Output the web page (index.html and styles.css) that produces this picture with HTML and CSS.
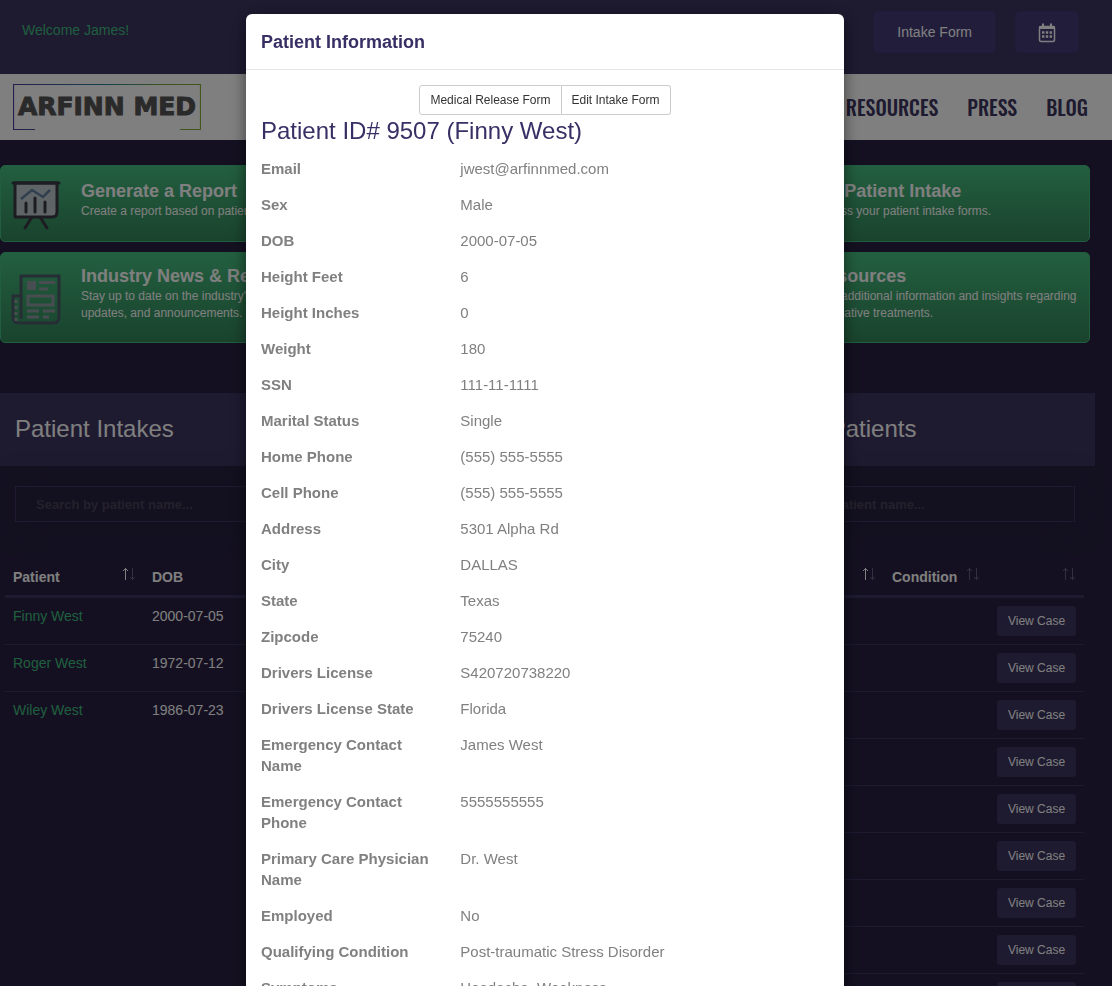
FILE: index.html
```html
<!DOCTYPE html>
<html lang="en">
<head>
<meta charset="utf-8">
<title>Arfinn Med - Patient Information</title>
<meta name="viewport" content="width=device-width, initial-scale=1">
<link rel="stylesheet" href="styles.css">
</head>
<body>
<svg class="sprite" aria-hidden="true">
  <symbol id="sort" viewBox="0 0 14 14">
    <path class="up" d="M3.500 13V1M1 4l2.500-2.500L6 4" fill="none"/>
    <path class="down" d="M10.500 1v12M8 10l2.500 2.500L13 10" fill="none"/>
  </symbol>
</svg>

<header class="topbar">
  <span class="welcome">Welcome James!</span>
  <div class="topbar-actions">
    <button type="button" class="btn-top">Intake Form</button>
    <button type="button" class="btn-top btn-calendar" aria-label="Calendar">
      <svg width="18" height="20" viewBox="0 0 18 20">
        <path d="M5 0.500v3M13 0.500v3" stroke="#fff" stroke-width="2"/>
        <rect x="1.500" y="3.500" width="15" height="15" rx="1.500" fill="none" stroke="#fff" stroke-width="1.500"/>
        <path d="M1 3h16v3H1z" fill="#fff"/>
        <path d="M4 9.500h10M4 13.500h10" stroke="#fff" stroke-width="2.400" stroke-dasharray="2.400 1.400"/>
      </svg>
    </button>
  </div>
</header>

<nav class="navbar">
  <a href="#home" class="logo">
    <svg class="logo-frame" width="188" height="46" viewBox="0 0 188 46" aria-hidden="true">
      <defs>
        <linearGradient id="frame" x1="0" y1="0" x2="188" y2="0" gradientUnits="userSpaceOnUse">
          <stop offset="0" stop-color="#4b3f96"/>
          <stop offset=".5" stop-color="#2d8299"/>
          <stop offset=".8" stop-color="#76a83e"/>
          <stop offset="1" stop-color="#82ae38"/>
        </linearGradient>
      </defs>
      <path d="M22 45.500H.5V.5h187v45H167" fill="none" stroke="url(#frame)" stroke-width="1.200"/>
    </svg>
    <span class="logo-text">ARFINN MED</span>
  </a>
  <div class="nav-links">
    <a href="#resources">RESOURCES</a>
    <a href="#press">PRESS</a>
    <a href="#blog">BLOG</a>
  </div>
</nav>

<main>
  <section class="cards">
    <a class="card" href="#report">
      <svg class="card-icon" width="50" height="52" viewBox="0 0 50 52">
        <path d="M21 37L14 48M29 37l7 11" stroke="#383944" stroke-width="3" stroke-linecap="round"/>
        <path d="M4 3h42v29q0 5-5 5H4z" fill="#bfc8cf" stroke="#383944" stroke-width="3" stroke-linejoin="round"/>
        <path d="M2 3h46" stroke="#383944" stroke-width="3" stroke-linecap="round"/>
        <path d="M10 19l11-9 11 7 7-7" fill="none" stroke="#5f7f9f" stroke-width="2.500"/>
        <path d="M15 23v9M24 18v14M34 22v10" stroke="#383944" stroke-width="3" stroke-linecap="round"/>
      </svg>
      <div class="card-text">
        <h4>Generate a Report</h4>
        <p>Create a report based on patient data.</p>
      </div>
    </a>
    <a class="card card-last" href="#intake">
      <div class="card-text">
        <h4>My Patient Intake</h4>
        <p>Access your patient intake forms.</p>
      </div>
    </a>
    <a class="card card-tall" href="#news">
      <svg class="card-icon" width="50" height="52" viewBox="0 0 50 52">
        <path d="M10 2h38v41q0 6-6 6H8q-6 0-6-6V22h8z" fill="none" stroke="#4f5b6b" stroke-width="3"/>
        <path d="M10 22v23" stroke="#4f5b6b" stroke-width="3"/>
        <path d="M5 26v22" stroke="#919ba3" stroke-width="3" stroke-dasharray="3 3"/>
        <path d="M16 7h9v9h-9z" fill="#919ba3"/>
        <path d="M28 8.500h16M28 15h9M16 37h12M32 37h12M16 43h12M32 43h6" stroke="#919ba3" stroke-width="3"/>
        <path d="M17 22h25v9H17z" fill="none" stroke="#919ba3" stroke-width="3"/>
      </svg>
      <div class="card-text">
        <h4>Industry News &amp; Research</h4>
        <p>Stay up to date on the industry's latest news, updates, and announcements.</p>
      </div>
    </a>
    <a class="card card-tall card-last" href="#library">
      <div class="card-text">
        <h4>Resources</h4>
        <p>Find additional information and insights regarding alternative treatments.</p>
      </div>
    </a>
  </section>

  <section class="panels">
    <div class="panels-title">
      <h3>Patient Intakes</h3>
      <h3 class="last">Recent Patients</h3>
    </div>
    <div class="panel">
      <div class="search"><input type="text" placeholder="Search by patient name..." aria-label="Search intakes"></div>
      <table class="intakes">
        <thead>
          <tr>
            <th class="col-name">Patient <svg class="sort sorted"><use href="#sort"/></svg></th>
            <th>DOB</th>
          </tr>
        </thead>
        <tbody>
          <tr><td><a href="#p1">Finny West</a></td><td>2000-07-05</td></tr>
          <tr><td><a href="#p2">Roger West</a></td><td>1972-07-12</td></tr>
          <tr><td><a href="#p3">Wiley West</a></td><td>1986-07-23</td></tr>
        </tbody>
      </table>
    </div>
    <div class="panel panel-last">
      <div class="search"><input type="text" placeholder="Search by patient name..." aria-label="Search patients"></div>
      <table class="patients">
        <thead>
          <tr>
            <th class="col-first"><svg class="sort sorted"><use href="#sort"/></svg></th>
            <th>Condition <svg class="sort"><use href="#sort"/></svg></th>
            <th class="col-action"><svg class="sort"><use href="#sort"/></svg></th>
          </tr>
        </thead>
        <tbody>
          <tr><td></td><td></td><td><button type="button" class="btn-case">View Case</button></td></tr>
          <tr><td></td><td></td><td><button type="button" class="btn-case">View Case</button></td></tr>
          <tr><td></td><td></td><td><button type="button" class="btn-case">View Case</button></td></tr>
          <tr><td></td><td></td><td><button type="button" class="btn-case">View Case</button></td></tr>
          <tr><td></td><td></td><td><button type="button" class="btn-case">View Case</button></td></tr>
          <tr><td></td><td></td><td><button type="button" class="btn-case">View Case</button></td></tr>
          <tr><td></td><td></td><td><button type="button" class="btn-case">View Case</button></td></tr>
          <tr><td></td><td></td><td><button type="button" class="btn-case">View Case</button></td></tr>
          <tr><td></td><td></td><td><button type="button" class="btn-case">View Case</button></td></tr>
        </tbody>
      </table>
    </div>
  </section>
</main>

<div class="overlay">
  <div class="modal" role="dialog" aria-labelledby="modal-title">
    <div class="modal-header"><h4 id="modal-title">Patient Information</h4></div>
    <div class="modal-body">
      <div class="btn-group">
        <button type="button">Medical Release Form</button>
        <button type="button">Edit Intake Form</button>
      </div>
      <h3>Patient ID# 9507 (Finny West)</h3>
      <dl>
        <dt>Email</dt><dd>jwest@arfinnmed.com</dd>
        <dt>Sex</dt><dd>Male</dd>
        <dt>DOB</dt><dd>2000-07-05</dd>
        <dt>Height Feet</dt><dd>6</dd>
        <dt>Height Inches</dt><dd>0</dd>
        <dt>Weight</dt><dd>180</dd>
        <dt>SSN</dt><dd>111-11-1111</dd>
        <dt>Marital Status</dt><dd>Single</dd>
        <dt>Home Phone</dt><dd>(555) 555-5555</dd>
        <dt>Cell Phone</dt><dd>(555) 555-5555</dd>
        <dt>Address</dt><dd>5301 Alpha Rd</dd>
        <dt>City</dt><dd>DALLAS</dd>
        <dt>State</dt><dd>Texas</dd>
        <dt>Zipcode</dt><dd>75240</dd>
        <dt>Drivers License</dt><dd>S420720738220</dd>
        <dt>Drivers License State</dt><dd>Florida</dd>
        <dt>Emergency Contact Name</dt><dd>James West</dd>
        <dt>Emergency Contact Phone</dt><dd>5555555555</dd>
        <dt>Primary Care Physician Name</dt><dd>Dr. West</dd>
        <dt>Employed</dt><dd>No</dd>
        <dt>Qualifying Condition</dt><dd>Post-traumatic Stress Disorder</dd>
        <dt>Symptoms</dt><dd>Headache, Weakness</dd>
      </dl>
    </div>
  </div>
</div>
</body>
</html>
```
FILE: styles.css
```css
* { box-sizing: border-box; }

html { height: 100%; }

body {
  height: 100%;
  margin: 0;
  overflow: hidden;
  background: #282142;
  color: #fff;
  font: 14px/20px "Liberation Sans", Arial, sans-serif;
}

h3, h4, p, dl, dd { margin: 0; }
a { color: #3fbf7f; text-decoration: none; }
button, input { font-family: inherit; }
.sprite { display: none; }

/* top bar */
.topbar {
  display: flex;
  justify-content: space-between;
  align-items: flex-start;
  height: 74px;
  padding: 11px 33px 0 22px;
  background: #3c3460;
}
.welcome { padding-top: 9px; color: #3fbf7f; }
.topbar-actions { display: flex; gap: 19px; }
.btn-top {
  height: 42px;
  padding: 0 23px;
  border: 1px solid #3e3771;
  border-radius: 4px;
  background: #423b76;
  color: #fff;
  font-size: 14px;
}
.btn-calendar { display: flex; align-items: center; padding: 2px 22px 0; }

/* navigation */
.navbar {
  display: flex;
  justify-content: space-between;
  align-items: center;
  height: 66px;
  padding: 0 24px 0 13px;
  background: #fff;
}
.logo { display: grid; align-items: center; justify-items: center; }
.logo > * { grid-area: 1 / 1; }
.logo-frame { display: block; }
.logo-text {
  color: #555;
  font: bold 25px/30px "DejaVu Sans", sans-serif;
  -webkit-text-stroke: 1px #555;
}
.nav-links { display: flex; gap: 29px; }
.nav-links a {
  color: #3c3460;
  font: 500 20px/24px Oswald, "Roboto Condensed", "Liberation Sans", sans-serif;
}

/* action cards */
.cards {
  display: grid;
  grid-template-columns: repeat(3, 1fr);
  gap: 10px;
  padding: 25px 22px 0 0;
}
.card {
  display: flex;
  padding: 14px 5px 21px 10px;
  border: 1px solid #41bd7e;
  border-radius: 5px;
  background: linear-gradient(#46be80, #33865a);
  color: #fff;
}
.card-tall { padding-top: 12px; padding-bottom: 20px; }
.card-last { grid-column: 3; }
.card-icon { flex: none; margin-bottom: -12px; }
.card-tall .card-icon { margin-top: 9px; }
.card-text { margin-left: auto; width: calc(100% - 70px); }
.card-icon + .card-text { margin-left: 20px; }
.card h4 { font-size: 18px; line-height: 23px; }
.card p { font-size: 12px; line-height: 17px; }

/* patient lists */
.panels {
  display: grid;
  grid-template-columns: repeat(3, 1fr);
  column-gap: 3px;
  padding: 50px 17px 0 0;
}
.panels-title {
  display: grid;
  grid-column: 1 / -1;
  grid-template-columns: repeat(3, 1fr);
  column-gap: 3px;
  padding: 23px 0 24px;
  background: #3c3460;
}
.panels-title h3 { padding-left: 15px; font-size: 24px; line-height: 26px; font-weight: normal; }
.panels-title .last { grid-column: 3; }
.panel-last { grid-column: 3; }
.search { padding: 20px 20px 37px 15px; }
.search input {
  display: block;
  width: 100%;
  height: 36px;
  padding: 0 20px;
  border: 1px solid #3c3460;
  background: #262040;
  box-shadow: 0 0 30px rgba(34, 30, 50, .6);
  color: #fff;
  font-size: 13px;
  font-weight: bold;
}
.search input::placeholder { color: #484357; opacity: 1; }

table {
  width: calc(100% - 16px);
  margin-left: 5px;
  border-collapse: separate;
  border-spacing: 0;
  table-layout: fixed;
}
th { padding: 8px; border-bottom: 3px solid #3c3460; text-align: left; vertical-align: top; }
td { height: 47px; padding: 8px; border-bottom: 1px solid #3c3460; vertical-align: top; }
.intakes tr:last-child td { border-bottom: 0; }
.patients td:last-child { text-align: right; }
.col-name { width: 139px; }
.col-first { width: 147px; }
.col-action { width: 96px; }
.sort { --up: #67627c; float: right; width: 14px; height: 14px; }
.sorted { --up: #fff; }
.up { stroke: var(--up); }
.down { stroke: #67627c; }
.btn-case {
  width: 79px;
  height: 30px;
  padding: 0;
  border: 0;
  border-radius: 3px;
  background: #3c3460;
  color: #fff;
  font-size: 12px;
}

/* dialog */
.overlay {
  position: fixed;
  inset: 0;
  padding: 14px 22px 30px 0;
  overflow-y: auto;
  scrollbar-width: none;
  background: rgba(0, 0, 0, .5);
}
.modal {
  max-width: 598px;
  margin: 0 auto;
  border-radius: 6px;
  background: #fff;
  box-shadow: 0 5px 15px rgba(0, 0, 0, .5);
  color: #808080;
}
.modal-header { padding: 16px 15px 14px; border-bottom: 1px solid #e5e5e5; color: #383065; }
.modal-header h4 { font-size: 18px; line-height: 25px; }
.modal-body { padding: 15px; }
.btn-group { display: flex; justify-content: center; }
.btn-group button {
  height: 30px;
  padding: 0 10px;
  border: 1px solid #ccc;
  background: #fff;
  color: #333;
  font-size: 12px;
}
.btn-group button:first-child { border-radius: 3px 0 0 3px; }
.btn-group button:last-child { border-left: 0; border-radius: 0 3px 3px 0; }
.modal-body h3 { padding: 3px 0 14px; color: #383065; font-size: 24px; line-height: 26px; font-weight: normal; }
dl {
  display: grid;
  grid-template-columns: 1fr 2fr;
  column-gap: 15px;
  row-gap: 15px;
  font-size: 15px;
  line-height: 21px;
}
dt { font-weight: bold; }
```
